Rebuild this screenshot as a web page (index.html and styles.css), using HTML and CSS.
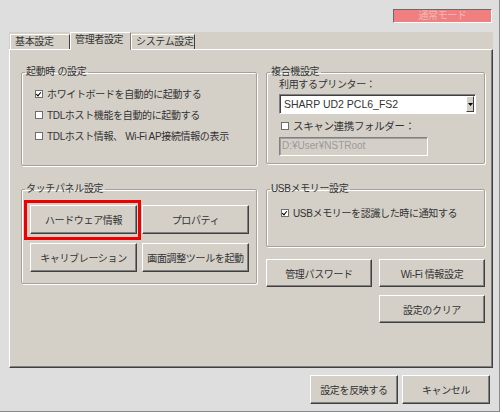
FILE: index.html
```html
<!DOCTYPE html>
<html lang="ja">
<head>
<meta charset="utf-8">
<link rel="stylesheet" href="styles.css">
</head>
<body>
<div class="window">
  <div class="topbar"><div class="badge">通常モード</div></div>
  <div class="tabctl">
    <div class="tabs">
      <div class="tab">基本設定</div>
      <div class="tab active">管理者設定</div>
      <div class="tab">システム設定</div>
    </div>
    <div class="panel">
      <div class="col left">
        <fieldset class="grp g-startup">
          <legend>起動時 の設定</legend>
          <div class="gbody">
            <div class="chk"><span class="box on"></span>ホワイトボードを自動的に起動する</div>
            <div class="chk"><span class="box"></span>TDLホスト機能を自動的に起動する</div>
            <div class="chk"><span class="box"></span>TDLホスト情報、 Wi-Fi AP接続情報の表示</div>
          </div>
        </fieldset>
        <fieldset class="grp g-touch">
          <legend>タッチパネル設定</legend>
          <div class="gbody">
            <div class="btngrid">
              <div class="focus"><div class="btn">ハードウェア情報</div></div>
              <div class="btn">プロパティ</div>
              <div class="btn">キャリブレーション</div>
              <div class="btn">画面調整ツールを起動</div>
            </div>
          </div>
        </fieldset>
      </div>
      <div class="col right">
        <fieldset class="grp g-mfp">
          <legend>複合機設定</legend>
          <div class="gbody">
            <div class="lbl">利用するプリンター：</div>
            <div class="select"><span class="val">SHARP UD2 PCL6_FS2</span><span class="arrow"><svg width="5" height="3" viewBox="0 0 5 3"><path d="M0 0H5L2.5 3Z" fill="#000"/></svg></span></div>
            <div class="chk scan"><span class="box"></span>スキャン連携フォルダー：</div>
            <div class="input">D:¥User¥NSTRoot</div>
          </div>
        </fieldset>
        <fieldset class="grp g-usb">
          <legend>USBメモリー設定</legend>
          <div class="gbody">
            <div class="chk"><span class="box on"></span>USBメモリーを認識した時に通知する</div>
          </div>
        </fieldset>
        <div class="btnrow">
          <div class="btn">管理パスワード</div>
          <div class="btn">Wi-Fi 情報設定</div>
        </div>
        <div class="btnrow end">
          <div class="btn">設定のクリア</div>
        </div>
      </div>
    </div>
  </div>
  <div class="footer">
    <div class="btn">設定を反映する</div>
    <div class="btn">キャンセル</div>
  </div>
</div>
</body>
</html>
```
FILE: styles.css
```css
* { box-sizing: border-box; }
html, body { margin: 0; padding: 0; background: #ffffff; }
body {
  font-family: "Liberation Sans", "Noto Sans CJK JP", sans-serif;
  font-size: 10px;
  color: #333333;
  letter-spacing: -0.35px;
}
.window {
  width: 500px;
  height: 412px;
  background: #dedede;
  border-right: 1px solid #8a8a8a;
  border-bottom: 1px solid #8a8a8a;
}
.topbar {
  height: 32px;
  display: flex;
  justify-content: flex-end;
  padding: 9px 7px 0 0;
}
.badge {
  width: 99px;
  height: 14px;
  background: #f08080;
  border: 1px solid;
  border-color: #6a6a6a #ffffff #ffffff #6a6a6a;
  color: #f2b9b9;
  text-align: center;
  line-height: 12px;
  font-size: 10px;
}
.tabctl {
  margin-left: 9px;
  width: 484px;
  height: 336px;
  background: #d4d0c8;
  display: flex;
  flex-direction: column;
}
.tabs {
  height: 17px;
  display: flex;
  align-items: flex-end;
  padding-left: 1px;
}
.tab {
  height: 15px;
  line-height: 14px;
  padding: 0 0 0 4px;
  border: 1px solid;
  border-bottom: none;
  border-color: #ffffff #404040 transparent #ffffff;
  width: 60px;
  white-space: nowrap;
}
.tab:nth-child(3) { width: 64px; }
.tab.active {
  height: 18px;
  width: 61px;
  margin-bottom: -1px;
  position: relative;
  background: #d4d0c8;
  border-right-color: #808080;
  padding-left: 4px;
  line-height: 14px;
}
.panel {
  flex: 1;
  border: 1px solid;
  border-color: #ffffff #404040 #404040 #ffffff;
  box-shadow: inset -1px -1px 0 #808080;
  display: flex;
  gap: 9px;
  padding: 15px 0 0 11px;
}
.col { display: flex; flex-direction: column; }
.col.left { width: 236px; gap: 16px; }
.col.right { width: 219px; }

.grp {
  margin: 0;
  padding: 0;
  min-inline-size: 0;
  border: 1px solid #a3a19b;
  box-shadow: inset 1px 1px 0 #ffffff, 1px 1px 0 #ffffff;
  border-radius: 2px;
}
.grp legend {
  padding: 0 2px 0 1px;
  margin-left: 3px;
  line-height: 14px;
  height: 14px;
}
.g-startup { height: 101px; }
.g-startup .gbody { padding: 4px 0 0 13px; }
.g-touch { height: 102px; }
.g-touch .gbody { padding: 4px 0 0 8px; }
.g-mfp { height: 99px; }
.g-mfp .gbody { padding: 0 0 0 12px; }
.g-usb { height: 65px; margin-top: 18px; }
.g-usb .gbody { padding: 6px 0 0 14px; }

.chk {
  height: 21px;
  display: flex;
  align-items: center;
  white-space: nowrap;
}
.box {
  width: 8px;
  height: 8px;
  background: #fff;
  border: 1px solid #6d6d6d;
  margin-right: 4px;
  flex: none;
  position: relative;
}
.box.on::after {
  content: "";
  position: absolute;
  left: 1px;
  top: 0px;
  width: 2px;
  height: 4px;
  border: solid #000;
  border-width: 0 1.5px 1.5px 0;
  transform: rotate(40deg);
}
.lbl { height: 13px; line-height: 12px; margin-top: 0; }
.select {
  width: 197px;
  height: 20px;
  margin-top: 2px;
  background: #fff;
  border: 1px solid;
  border-color: #808080 #ffffff #ffffff #808080;
  box-shadow: inset 1px 1px 0 #404040;
  display: flex;
  align-items: center;
  justify-content: space-between;
  padding: 1px 1px 1px 4px;
  font-size: 10.5px;
  letter-spacing: 0;
}
.arrow {
  width: 8px;
  height: 16px;
  background: #d4d0c8;
  border: 1px solid;
  border-color: #ffffff #404040 #404040 #ffffff;
  display: flex;
  align-items: center;
  justify-content: center;
}
.chk.scan { height: 23px; padding-left: 2px; font-size: 10.5px; }
.input {
  width: 149px;
  height: 19px;
  border: 1px solid;
  border-color: #808080 #ffffff #ffffff #808080;
  box-shadow: inset 1px 1px 0 #a0a0a0;
  color: #9a9a9a;
  padding-left: 2px;
  line-height: 16px;
  font-size: 10px;
  letter-spacing: 0;
}

.btn {
  background: #d4d0c8;
  border: 1px solid;
  border-color: #ffffff #404040 #404040 #ffffff;
  box-shadow: inset -1px -1px 0 #808080;
  display: flex;
  align-items: center;
  justify-content: center;
  white-space: nowrap;
}
.btngrid {
  display: grid;
  grid-template-columns: 107px 107px;
  grid-auto-rows: 29px;
  column-gap: 5px;
  row-gap: 9px;
  margin-top: 5px;
}
.btngrid .btn { height: 29px; }
.focus {
  position: relative;
  height: 29px;
}
.focus .btn { height: 29px; }
.focus::before {
  content: "";
  position: absolute;
  left: -6px;
  top: -5px;
  right: -4px;
  bottom: -6px;
  border: 3px solid #ee0000;
}
.btnrow {
  display: flex;
  justify-content: space-between;
  margin-top: 12px;
}
.btnrow .btn { width: 106px; height: 28px; }
.btnrow.end { justify-content: flex-end; margin-top: 8px; }

.footer {
  display: flex;
  justify-content: flex-end;
  gap: 4px;
  padding: 7px 9px 0 0;
}
.footer .btn { width: 88px; height: 29px; }
```
